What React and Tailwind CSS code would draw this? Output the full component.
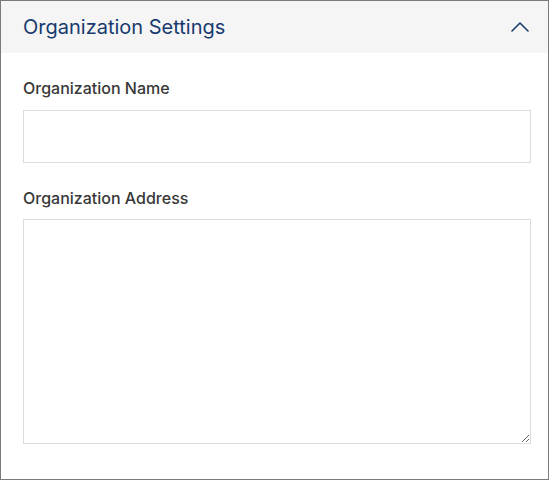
import { ChevronUp } from 'lucide-react';

export default function App() {
  return (
    <div className="w-[549px] h-[480px] bg-white" style={{ fontFamily: 'Inter, "Noto Sans", sans-serif' }}>
      <div className="h-full border border-[#7a7a7a] flex flex-col">
        <div className="h-[52px] bg-[#f5f5f5] flex items-center justify-between pl-[22px] pr-[12px]">
          <h2 className="text-[20px] text-[#183a6e] font-normal">Organization Settings</h2>
          <ChevronUp size={32} strokeWidth={1.2} className="text-[#183a6e]" />
        </div>
        <div className="flex flex-col pl-[22px] pr-[17px] pt-[25px]">
          <label className="text-[16px] font-[450] text-[#383838] leading-[20px]">Organization Name</label>
          <input type="text" className="mt-[12px] h-[53px] border border-[#dcdcdc] outline-none" />
          <label className="mt-[25px] text-[16px] font-[450] text-[#383838] leading-[20px]">Organization Address</label>
          <textarea className="mt-[11px] h-[225px] border border-[#dcdcdc] outline-none resize-y" />
        </div>
      </div>
    </div>
  );
}
